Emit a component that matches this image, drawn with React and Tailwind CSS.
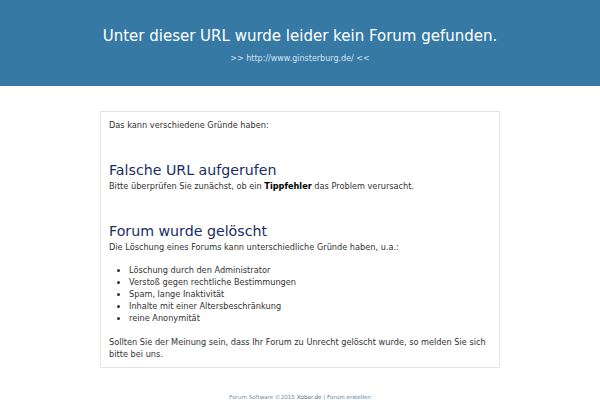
export default function App() {
    return (
        <div className="min-h-screen bg-white font-['DejaVu_Sans',sans-serif]">
            <header className="h-[86px] bg-[#3779a5] pt-[24px] text-center text-white">
                <h1 className="text-[15px] leading-[24px]">Unter dieser URL wurde leider kein Forum gefunden.</h1>
                <p className="mt-[5px] text-[8px] leading-[12px] text-[#d5e3ee]">&gt;&gt; http://www.ginsterburg.de/ &lt;&lt;</p>
            </header>

            <main className="mx-auto mt-[25px] w-[400px] border border-[#e3e3e3] px-[8px] pt-[7px] pb-[7px] text-[8.2px] leading-[12px] text-[#333]">
                <p>Das kann verschiedene Gründe haben:</p>

                <h2 className="mt-[29px] text-[14.2px] leading-[20px] text-[#1a2e63]">Falsche URL aufgerufen</h2>
                <p>Bitte überprüfen Sie zunächst, ob ein <b className="text-black">Tippfehler</b> das Problem verursacht.</p>

                <h2 className="mt-[29px] text-[14.2px] leading-[20px] text-[#1a2e63]">Forum wurde gelöscht</h2>
                <p>Die Löschung eines Forums kann unterschiedliche Gründe haben, u.a.:</p>

                <ul className="mt-[11px] list-disc pl-[20px]">
                    <li>Löschung durch den Administrator</li>
                    <li>Verstoß gegen rechtliche Bestimmungen</li>
                    <li>Spam, lange Inaktivität</li>
                    <li>Inhalte mit einer Altersbeschränkung</li>
                    <li>reine Anonymität</li>
                </ul>

                <p className="mt-[12px]">Sollten Sie der Meinung sein, dass Ihr Forum zu Unrecht gelöscht wurde, so melden Sie sich bitte bei uns.</p>
            </main>

            <footer className="mt-[24px] text-center text-[5.6px] leading-[10px] text-[#7a8b9b]">
                Forum Software ©2015 <span className="text-[#556677]">Xobor.de</span> | <span className="text-[#5b7fa0]">Forum erstellen</span>
            </footer>
        </div>
    );
}
